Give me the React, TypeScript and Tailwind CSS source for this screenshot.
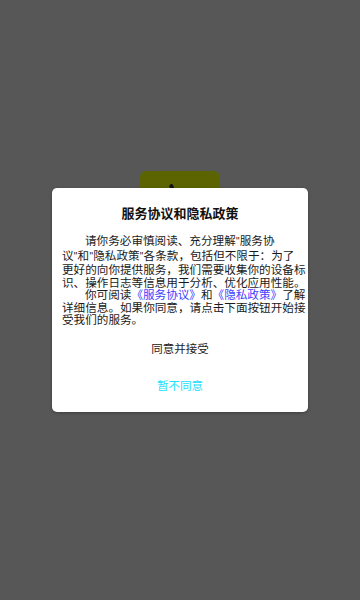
import React from "react";

const font = { fontFamily: '"Noto Sans CJK SC", "Noto Sans", sans-serif' };

function Q() {
  return (
    <span className="inline-block w-[4px] text-center font-['Liberation_Sans',sans-serif] text-[10px]">
      "
    </span>
  );
}

export default function App() {
  return (
    <div
      className="relative flex h-[600px] w-[360px] items-center justify-center overflow-hidden bg-[#575757]"
      style={font}
    >
      {/* splash icon behind the overlay */}
      <div className="absolute left-[140px] top-[171px] h-[80px] w-[80px] rounded-[6px] bg-[#5b6400]">
        <div className="absolute left-[30px] top-[13px] h-[8px] w-[4px] rotate-[-20deg] rounded-full bg-[#111]" />
      </div>

      <div className="relative z-10 flex w-[256px] flex-col rounded-[5px] bg-white shadow-[0_1px_3px_rgba(0,0,0,0.3)]">
        <div className="pt-[16px] text-center text-[13px] font-bold leading-[18px] text-[#111]">
          服务协议和隐私政策
        </div>

        <div className="mt-[12px] px-[10px] text-[11.6px] leading-[12.5px] text-[#1a1a1a] whitespace-nowrap">
          <div className="pl-[23px]">
            请你务必审慎阅读、充分理解<Q />服务协
          </div>
          <div>
            议<Q />和<Q />隐私政策<Q />各条款，包括但不限于：为了
          </div>
          <div>更好的向你提供服务，我们需要收集你的设备标</div>
          <div>识、操作日志等信息用于分析、优化应用性能。</div>
          <div className="pl-[23px]">
            你可阅读<span className="text-[#4040ff]">《服务协议》</span>和
            <span className="text-[#4040ff]">《隐私政策》</span>了解
          </div>
          <div>详细信息。如果你同意，请点击下面按钮开始接</div>
          <div>受我们的服务。</div>
        </div>

        <button className="mt-[4px] h-[37px] text-center text-[11.5px] text-[#222]">
          同意并接受
        </button>
        <button className="mb-[8px] h-[37px] text-center text-[11.5px] text-[#22e0ff]">
          暂不同意
        </button>
      </div>
    </div>
  );
}
